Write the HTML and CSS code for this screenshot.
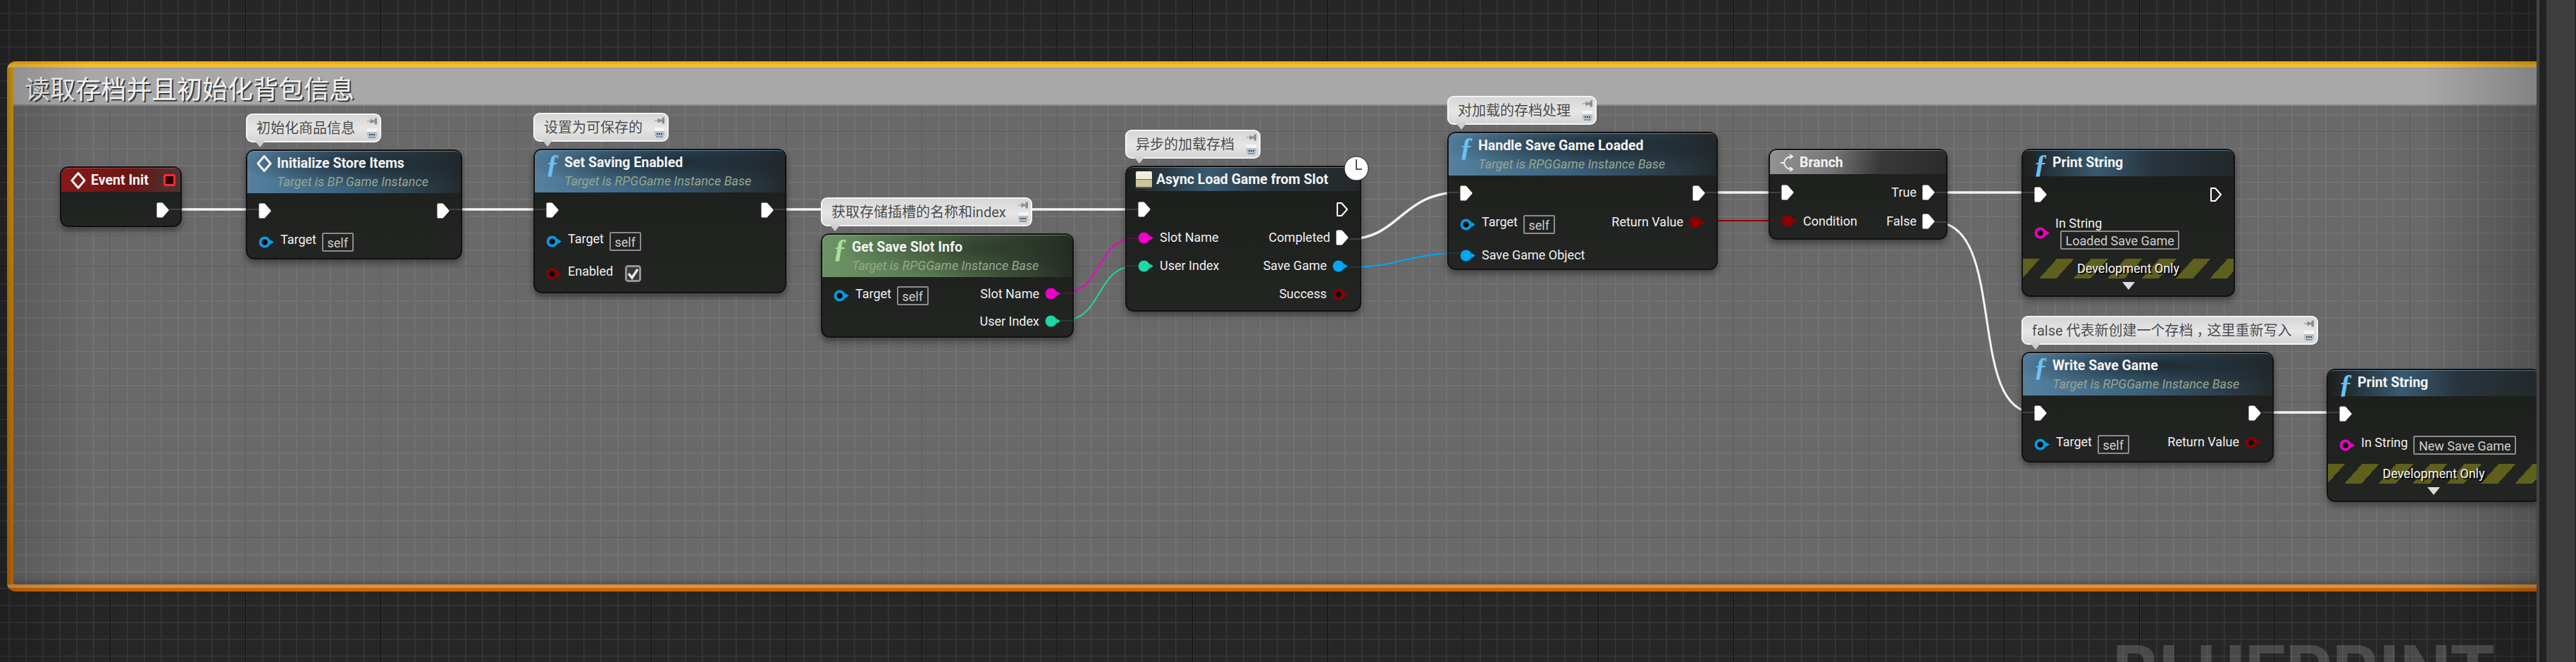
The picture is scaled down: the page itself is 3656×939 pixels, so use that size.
FILE: index.html
```html
<!DOCTYPE html>
<html lang="zh">
<head>
    <meta charset="UTF-8">
    <title>Blueprint</title>
    <link rel="stylesheet" href="styles.css">
</head>
<body>
    <svg class="defs" width="0" height="0">
        <symbol id="exec" viewBox="0 0 18 22"><path d="M2 2H8L16 11L8 20H2Z" fill="currentColor" stroke="currentColor" stroke-width="3" stroke-linejoin="round"/></symbol>
        <symbol id="exec-open" viewBox="0 0 18 22"><path d="M2 2H8L16 11L8 20H2Z" fill="none" stroke="currentColor" stroke-width="2" stroke-linejoin="round"/></symbol>
        <symbol id="data" viewBox="0 0 24 18"><circle cx="9" cy="9" r="8.5" fill="currentColor"/><path d="M17 5L23 9L17 13Z" fill="currentColor"/></symbol>
        <symbol id="data-open" viewBox="0 0 24 18"><circle cx="9" cy="9" r="6.5" fill="#0c0c0c" stroke="currentColor" stroke-width="4"/><path d="M17 5L23 9L17 13Z" fill="currentColor"/></symbol>
        <symbol id="diamond" viewBox="0 0 24 24"><path d="M12 1.5L21 12L12 22.5L3 12Z" fill="none" stroke="#f2f2f2" stroke-width="3" stroke-linejoin="round"/></symbol>
        <symbol id="pushpin" viewBox="0 0 14 10"><path d="M0 5H5M5 2L8 4H11V1H14V9H11V6H8L5 8Z" fill="#8d8d8d" stroke="#8d8d8d"/></symbol>
        <symbol id="chat" viewBox="0 0 14 14"><rect width="14" height="5" fill="#f4f4f4"/><rect y="5" width="14" height="7" fill="#b5c0cc"/><rect y="12" x="2" width="10" height="2" fill="#8a98a8"/><path d="M3 8h2v2H3zM6 8h2v2H6zM9 8h2v2H9z" fill="#3d4650"/></symbol>
    </svg>

    <div class="graph">
        <!-- comment box -->
        <div class="comment">
            <div class="comment-title">读取存档并且初始化背包信息</div>
            <div class="comment-body"></div>
        </div>
        <div class="edge-shade"></div>
        <div class="watermark">BLUEPRINT</div>

        <!-- wires -->
        <svg class="wires" width="3600" height="939">
            <path class="w-exec" d="M240 297H367M638 297H775M1098 297H1615M2419 273H2527M2746 273H2888M3210 585H3320"/>
            <path class="w-exec" d="M1915 339C1985 339 1990 273 2071 273"/>
            <path class="w-exec w-thin" d="M2746 315C2850 315 2790 585 2887 585"/>
            <path class="w-data w-pink" d="M1505 416C1570 416 1550 338 1615 338"/>
            <path class="w-data w-teal" d="M1505 455C1570 455 1550 377 1615 377"/>
            <path class="w-data w-blue" d="M1915 379C1985 379 2000 359 2071 359"/>
            <path class="w-data w-red" d="M2419 313H2527"/>
        </svg>

        <!-- Event Init -->
        <div class="node n-event">
            <div class="node-head head-red">
                <svg class="head-icon"><use href="#diamond"/></svg>
                <div class="head-title">Event Init</div>
                <span class="delegate"></span>
            </div>
            <div class="node-body">
                <div class="pin-row"><span></span><svg class="pin-exec c-white"><use href="#exec"/></svg></div>
            </div>
        </div>

        <!-- Initialize Store Items -->
        <div class="node n-init">
            <div class="bubble"><span class="bubble-text">初始化商品信息</span><span class="bubble-icons"><svg class="i-pin"><use href="#pushpin"/></svg><svg class="i-chat"><use href="#chat"/></svg></span></div>
            <div class="node-head head-blue">
                <svg class="head-icon"><use href="#diamond"/></svg>
                <div class="head-title">Initialize Store Items</div>
                <div class="head-sub">Target is BP Game Instance</div>
            </div>
            <div class="node-body">
                <div class="pin-row"><svg class="pin-exec c-white"><use href="#exec"/></svg><svg class="pin-exec c-white"><use href="#exec"/></svg></div>
                <div class="pin-row"><div class="pin-side"><svg class="pin-data c-blue"><use href="#data-open"/></svg><span class="label">Target</span><span class="value">self</span></div></div>
            </div>
        </div>

        <!-- Set Saving Enabled -->
        <div class="node n-saving">
            <div class="bubble"><span class="bubble-text">设置为可保存的</span><span class="bubble-icons"><svg class="i-pin"><use href="#pushpin"/></svg><svg class="i-chat"><use href="#chat"/></svg></span></div>
            <div class="node-head head-blue">
                <span class="func-icon">ƒ</span>
                <div class="head-title">Set Saving Enabled</div>
                <div class="head-sub">Target is RPGGame Instance Base</div>
            </div>
            <div class="node-body">
                <div class="pin-row"><svg class="pin-exec c-white"><use href="#exec"/></svg><svg class="pin-exec c-white"><use href="#exec"/></svg></div>
                <div class="pin-row"><div class="pin-side"><svg class="pin-data c-blue"><use href="#data-open"/></svg><span class="label">Target</span><span class="value">self</span></div></div>
                <div class="pin-row row-check"><div class="pin-side"><svg class="pin-data c-red"><use href="#data-open"/></svg><span class="label">Enabled</span>
                    <svg class="check" viewBox="0 0 23 24"><rect x="1.5" y="1.5" width="20" height="21" rx="3" fill="#3a3a3a" stroke="#949494" stroke-width="3"/><path d="M5 12L10 18L18 6" fill="none" stroke="#ececec" stroke-width="3.5"/></svg></div></div>
            </div>
        </div>

        <!-- Get Save Slot Info -->
        <div class="node n-slot">
            <div class="bubble"><span class="bubble-text">获取存储插槽的名称和index</span><span class="bubble-icons"><svg class="i-pin"><use href="#pushpin"/></svg><svg class="i-chat"><use href="#chat"/></svg></span></div>
            <div class="node-head head-green">
                <span class="func-icon func-green">ƒ</span>
                <div class="head-title">Get Save Slot Info</div>
                <div class="head-sub">Target is RPGGame Instance Base</div>
            </div>
            <div class="node-body">
                <div class="pin-row">
                    <div class="pin-side"><svg class="pin-data c-blue"><use href="#data-open"/></svg><span class="label">Target</span><span class="value">self</span></div>
                    <div class="pin-side pin-up"><span class="label">Slot Name</span><svg class="pin-data c-pink"><use href="#data"/></svg></div>
                </div>
                <div class="pin-row"><span></span><div class="pin-side pin-up"><span class="label">User Index</span><svg class="pin-data c-teal"><use href="#data"/></svg></div></div>
            </div>
        </div>

        <!-- Async Load Game from Slot -->
        <div class="node n-async">
            <div class="bubble"><span class="bubble-text">异步的加载存档</span><span class="bubble-icons"><svg class="i-pin"><use href="#pushpin"/></svg><svg class="i-chat"><use href="#chat"/></svg></span></div>
            <svg class="clock" viewBox="0 0 36 36"><circle cx="18" cy="18" r="17" fill="#fff" stroke="#1a1a1a" stroke-width="1"/><path d="M18 5V19H26" fill="none" stroke="#555" stroke-width="2"/></svg>
            <div class="node-head head-blue head-short">
                <span class="latent-icon"></span>
                <div class="head-title">Async Load Game from Slot</div>
            </div>
            <div class="node-body">
                <div class="pin-row"><svg class="pin-exec c-white"><use href="#exec"/></svg><svg class="pin-exec c-white"><use href="#exec-open"/></svg></div>
                <div class="pin-row">
                    <div class="pin-side"><svg class="pin-data c-pink"><use href="#data"/></svg><span class="label">Slot Name</span></div>
                    <div class="pin-side"><span class="label">Completed</span><svg class="pin-exec c-white"><use href="#exec"/></svg></div>
                </div>
                <div class="pin-row">
                    <div class="pin-side"><svg class="pin-data c-teal"><use href="#data"/></svg><span class="label">User Index</span></div>
                    <div class="pin-side"><span class="label">Save Game</span><svg class="pin-data c-sky"><use href="#data"/></svg></div>
                </div>
                <div class="pin-row"><span></span><div class="pin-side"><span class="label">Success</span><svg class="pin-data c-red"><use href="#data-open"/></svg></div></div>
            </div>
        </div>

        <!-- Handle Save Game Loaded -->
        <div class="node n-handle">
            <div class="bubble"><span class="bubble-text">对加载的存档处理</span><span class="bubble-icons"><svg class="i-pin"><use href="#pushpin"/></svg><svg class="i-chat"><use href="#chat"/></svg></span></div>
            <div class="node-head head-blue">
                <span class="func-icon">ƒ</span>
                <div class="head-title">Handle Save Game Loaded</div>
                <div class="head-sub">Target is RPGGame Instance Base</div>
            </div>
            <div class="node-body">
                <div class="pin-row"><svg class="pin-exec c-white"><use href="#exec"/></svg><svg class="pin-exec c-white"><use href="#exec"/></svg></div>
                <div class="pin-row">
                    <div class="pin-side"><svg class="pin-data c-blue"><use href="#data-open"/></svg><span class="label">Target</span><span class="value">self</span></div>
                    <div class="pin-side pin-up"><span class="label">Return Value</span><svg class="pin-data c-red"><use href="#data"/></svg></div>
                </div>
                <div class="pin-row"><div class="pin-side"><svg class="pin-data c-sky"><use href="#data"/></svg><span class="label">Save Game Object</span></div></div>
            </div>
        </div>

        <!-- Branch -->
        <div class="node n-branch">
            <div class="node-head head-grey">
                <svg class="head-icon" viewBox="0 0 22 24"><path d="M18 3C11 3 8 7 7 12C8 17 11 21 18 21M2 12H7M15 0L19 3L15 6M15 18L19 21L15 24" fill="none" stroke="#eee" stroke-width="2"/></svg>
                <div class="head-title">Branch</div>
            </div>
            <div class="node-body">
                <div class="pin-row">
                    <svg class="pin-exec c-white"><use href="#exec"/></svg>
                    <div class="pin-side"><span class="label">True</span><svg class="pin-exec c-white"><use href="#exec"/></svg></div>
                </div>
                <div class="pin-row">
                    <div class="pin-side"><svg class="pin-data c-red"><use href="#data"/></svg><span class="label">Condition</span></div>
                    <div class="pin-side"><span class="label">False</span><svg class="pin-exec c-white"><use href="#exec"/></svg></div>
                </div>
            </div>
        </div>

        <!-- Print String -->
        <div class="node n-print">
            <div class="node-head head-blue head-short">
                <span class="func-icon">ƒ</span>
                <div class="head-title">Print String</div>
            </div>
            <div class="node-body">
                <div class="pin-row"><svg class="pin-exec c-white"><use href="#exec"/></svg><svg class="pin-exec c-white"><use href="#exec-open"/></svg></div>
                <div class="string-row">
                    <svg class="pin-data c-pink"><use href="#data-open"/></svg>
                    <div class="string-stack"><span class="label">In String</span><span class="value string-box">Loaded Save Game</span></div>
                </div>
            </div>
            <div class="dev-only">Development Only</div>
            <div class="dev-arrow"></div>
        </div>

        <!-- Write Save Game -->
        <div class="node n-write">
            <div class="bubble"><span class="bubble-text">false 代表新创建一个存档<span class="comma">，</span>这里重新写入</span><span class="bubble-icons"><svg class="i-pin"><use href="#pushpin"/></svg><svg class="i-chat"><use href="#chat"/></svg></span></div>
            <div class="node-head head-blue">
                <span class="func-icon">ƒ</span>
                <div class="head-title">Write Save Game</div>
                <div class="head-sub">Target is RPGGame Instance Base</div>
            </div>
            <div class="node-body">
                <div class="pin-row"><svg class="pin-exec c-white"><use href="#exec"/></svg><svg class="pin-exec c-white"><use href="#exec"/></svg></div>
                <div class="pin-row">
                    <div class="pin-side"><svg class="pin-data c-blue"><use href="#data-open"/></svg><span class="label">Target</span><span class="value">self</span></div>
                    <div class="pin-side pin-up"><span class="label">Return Value</span><svg class="pin-data c-red"><use href="#data-open"/></svg></div>
                </div>
            </div>
        </div>

        <!-- Print String, second one runs past the panel edge -->
        <div class="node n-print2">
            <div class="node-head head-blue head-short">
                <span class="func-icon">ƒ</span>
                <div class="head-title">Print String</div>
            </div>
            <div class="node-body">
                <div class="pin-row"><svg class="pin-exec c-white"><use href="#exec"/></svg></div>
                <div class="pin-row"><div class="pin-side"><svg class="pin-data c-pink"><use href="#data-open"/></svg><span class="label">In String</span><span class="value">New Save Game</span></div></div>
            </div>
            <div class="dev-only">Development Only</div>
            <div class="dev-arrow"></div>
        </div>

        <!-- faint wire ends that show through the node edge -->
        <svg class="stubs" width="3600" height="939">
            <path stroke="#fff" d="M240 297H258M349 297H367M638 297H656M757 297H775M1098 297H1115M1598 297H1615M1915 339H1932M2055 273H2071M2419 273H2437M2510 273H2527M2746 273H2764M2746 315H2764M2869 273H2888M2869 585H2887M3210 585H3227M3302 585H3320"/>
            <path stroke="#00a8f4" d="M1915 379H1932M2055 359H2071"/>
            <path stroke="#ff00d4" d="M1505 416H1524M1598 338H1615"/>
            <path stroke="#1fe0a8" d="M1505 455H1524M1598 377H1615"/>
            <path stroke="#a00000" d="M2419 313H2437M2510 313H2527"/>
        </svg>
    </div>
    <div class="side"></div>
</body>
</html>
```

FILE: styles.css
```css
/* General Styling */
* {
    margin: 0;
    padding: 0;
    box-sizing: border-box;
}

body {
    display: flex;
    height: 100vh;
    overflow: hidden;
    background: #262626;
    font-family: Roboto, "Noto Sans CJK SC", sans-serif;
    color: #eee;
}

.defs {
    position: absolute;
}

/* Graph canvas */
.graph {
    position: relative;
    flex: none;
    width: 3600px;
    height: 939px;
    overflow: hidden;
    background-color: #262626;
    background-image:
        linear-gradient(90deg, #111 1px, transparent 1px),
        linear-gradient(#111 1px, transparent 1px),
        linear-gradient(90deg, #363636 1px, #303030 1px 2px, transparent 2px),
        linear-gradient(#363636 1px, #303030 1px 2px, transparent 2px);
    background-size: 192px 192px, 192px 192px, 24px 24px, 24px 24px;
    background-position: 156px 0, 0 186px, 12px 0, 0 18px;
}

.side {
    flex: 1;
    background: linear-gradient(90deg, #444 0 4px, #222 4px 14px, #3e3e3e 14px calc(100% - 2px), #2a2a2a calc(100% - 2px));
}

.watermark {
    position: absolute;
    left: 2998px;
    top: 894px;
    font-size: 103px;
    line-height: 120px;
    font-weight: 700;
    color: rgba(255, 255, 255, 0.17);
    white-space: nowrap;
}

/* Comment box */
.comment {
    position: absolute;
    left: 10px;
    top: 87px;
    width: 3700px;
    height: 752px;
    padding: 9px 0 10px 9px;
    display: flex;
    flex-direction: column;
    border-radius: 12px;
    background:
        linear-gradient(#f4ae0a 0 4px, #f3bd42 4px 9px, transparent 9px),
        linear-gradient(transparent calc(100% - 10px), #dc9240 calc(100% - 10px) calc(100% - 5px), #cc6600 calc(100% - 5px)),
        linear-gradient(90deg, rgba(0, 0, 0, 0.12), transparent 9px),
        linear-gradient(#e0a010, #c87008);
}

.comment-title {
    flex: none;
    height: 54px;
    padding: 6px 0 0 16px;
    font-size: 36px;
    line-height: 50px;
    color: #f2f2f2;
    text-shadow: 2px 2px 0 #3c3c3c;
    background: #a8a8a8;
    border-top: 1px solid #999;
    border-bottom: 2px solid #8c8c8c;
    border-top-left-radius: 4px;
}

.comment-body {
    flex: 1;
    background-color: #696969;
    background-image:
        linear-gradient(90deg, #5b5b5b 1px, transparent 1px),
        linear-gradient(#5b5b5b 1px, transparent 1px),
        linear-gradient(90deg, #757575 1px, #6f6f6f 1px 2px, transparent 2px),
        linear-gradient(#757575 1px, #6f6f6f 1px 2px, transparent 2px);
    background-size: 192px 192px, 192px 192px, 24px 24px, 24px 24px;
    background-position: 156px 0, 0 186px, 12px 0, 0 18px;
    background-attachment: fixed;
    box-shadow: inset 0 -14px 14px -12px rgba(0, 0, 0, 0.3);
    border-bottom-left-radius: 4px;
}

.edge-shade {
    position: absolute;
    inset: 0;
    background:
        linear-gradient(90deg, rgba(0, 0, 0, 0.16), transparent 130px),
        linear-gradient(270deg, rgba(0, 0, 0, 0.22), transparent 160px);
}

/* Wires */
.wires, .stubs {
    position: absolute;
    left: 0;
    top: 0;
    fill: none;
}

.stubs {
    z-index: 5;
    stroke-width: 2;
    opacity: 0.14;
}

.w-exec { stroke: #f4f4f4; stroke-width: 3.5; fill: none; }
.w-thin { stroke-width: 3; }
.w-data { stroke-width: 2; fill: none; }
.w-pink { stroke: #f000c8; }
.w-teal { stroke: #1cd8a4; }
.w-blue { stroke: #00a8f4; }
.w-red { stroke: #9a0000; }

/* Nodes */
.node {
    position: absolute;
    z-index: 3;
    display: flex;
    flex-direction: column;
    background: linear-gradient(#1c1e1c, #232523);
    border: 2px solid #111;
    border-radius: 12px;
    box-shadow: 0 5px 10px rgba(0, 0, 0, 0.4);
    --row: 44px;
    --pad: 3px;
}

.n-event { left: 85px; top: 236px; width: 173px; height: 86px; --row: 44px; --pad: 4px; }
.n-init { left: 349px; top: 212px; width: 307px; height: 156px; }
.n-saving { left: 757px; top: 211px; width: 359px; height: 205px; }
.n-slot { left: 1165px; top: 331px; width: 359px; height: 148px; --row: 39px; --pad: 7px; }
.n-async { left: 1597px; top: 235px; width: 335px; height: 207px; --row: 40px; --pad: 6px; }
.n-handle { left: 2054px; top: 187px; width: 384px; height: 196px; }
.n-branch { left: 2510px; top: 211px; width: 254px; height: 129px; --row: 41px; --pad: 5px; }
.n-print { left: 2869px; top: 211px; width: 303px; height: 210px; --row: 40px; --pad: 6px; }
.n-write { left: 2869px; top: 499px; width: 358px; height: 157px; }
.n-print2 { left: 3302px; top: 523px; width: 304px; height: 189px; }

.node-head {
    flex: none;
    display: grid;
    grid-template-columns: 42px 1fr;
    align-items: center;
    padding: 3px 0;
    border-radius: 9px 9px 0 0;
    border-top: 1px solid rgba(130, 180, 215, 0.5);
}

.head-title {
    grid-column: 2;
    grid-row: 1;
    font-size: 19.5px;
    line-height: 27px;
    font-weight: 700;
    color: #f4f4f4;
    white-space: nowrap;
}

.head-sub {
    grid-column: 2;
    font-size: 18px;
    line-height: 26px;
    font-style: italic;
    color: #98a58c;
    white-space: nowrap;
}

.head-blue {
    background:
        radial-gradient(ellipse 60% 60% at 55% 28%, rgba(20, 26, 30, 0.7), transparent 100%),
        linear-gradient(90deg, #55819f 0%, #3b637e 45%, #23292c 100%);
}

.head-short {
    background: linear-gradient(90deg, #4f7c9c 0%, #39597000 0%, #385a72 35%, #28343c 62%, #23282a 100%);
}

.head-green {
    border-top-color: rgba(160, 200, 150, 0.5);
    background:
        radial-gradient(ellipse 55% 70% at 62% 30%, rgba(22, 28, 22, 0.45), transparent 100%),
        linear-gradient(90deg, #6c9365 0%, #56784f 45%, #262c25 100%);
}

.head-red {
    position: relative;
    border-top-color: rgba(220, 120, 120, 0.4);
    background: linear-gradient(90deg, #861a1a 0%, #6e1313 55%, #4a3434 100%);
}

.head-grey {
    border-top-color: rgba(255, 255, 255, 0.3);
    background: linear-gradient(100deg, #949494 0%, #767676 35%, #393939 62%, #2a2a2a 100%);
}

.head-icon {
    grid-column: 1;
    grid-row: 1;
    justify-self: center;
    width: 24px;
    height: 24px;
    margin-left: 6px;
}

.func-icon {
    grid-column: 1;
    grid-row: 1 / span 2;
    align-self: start;
    justify-self: center;
    margin-left: 8px;
    font-family: "Liberation Serif", serif;
    font-style: italic;
    font-weight: 700;
    font-size: 38px;
    line-height: 30px;
    color: #6cc0f5;
}

.func-green {
    color: #a8e298;
}

.latent-icon {
    grid-column: 1;
    justify-self: center;
    width: 23px;
    height: 24px;
    margin-left: 6px;
    border-radius: 2px;
    background: linear-gradient(#f2eedc 0 11px, #6d6a58 11px 12px, #cdc39d 12px 22px, #5f5a48 22px);
}

.delegate {
    position: absolute;
    right: 7px;
    top: 8px;
    width: 17px;
    height: 17px;
    background: #2a0000;
    border: 3px solid #ff2a2a;
    border-radius: 3px;
}

.clock {
    position: absolute;
    right: -13px;
    top: -16px;
    z-index: 2;
    width: 36px;
    height: 36px;
}

.node-body {
    padding: var(--pad) 16px 0;
}

.pin-row {
    display: flex;
    justify-content: space-between;
    align-items: center;
    height: var(--row);
}

.row-check {
    margin-top: 2px;
}

.pin-side {
    display: flex;
    align-items: center;
    gap: 8px;
}

.pin-up {
    transform: translateY(-3px);
}

.pin-exec {
    flex: none;
    width: 18px;
    height: 22px;
}

.pin-data {
    flex: none;
    width: 23px;
    height: 17px;
}

.c-white { color: #fff; }
.c-blue { color: #0a9ae6; }
.c-sky { color: #00a8f4; }
.c-red { color: #8c0000; }
.c-pink { color: #f000c8; }
.c-teal { color: #1cd8a4; }

.label {
    font-size: 18px;
    line-height: 22px;
    white-space: nowrap;
    color: #f0f0f0;
}

/* label sits a bit higher than the pin when a value box follows it */
.label:has(+ .value), .label:has(+ .check) {
    transform: translateY(-3px);
}

.value {
    padding: 0 5.5px;
    height: 27px;
    font-size: 18px;
    line-height: 25px;
    color: #cfcfcf;
    border: 2px solid #8c8c8c;
    border-radius: 2px;
    white-space: nowrap;
}

.check {
    width: 23px;
    height: 24px;
    margin-left: 9px;
}

/* In String pin with the box below its label */
.string-row {
    display: flex;
    align-items: center;
    gap: 7px;
    margin-top: 11px;
}

.string-stack {
    display: flex;
    flex-direction: column;
    align-items: flex-start;
}

.string-stack .label {
    height: 20px;
    line-height: 20px;
    transform: none;
}

.string-box {
    margin-left: 7px;
}

.dev-only {
    flex: none;
    height: 28px;
    margin-top: 13px;
    font-size: 18px;
    line-height: 28px;
    text-align: center;
    color: #f4f4f4;
    text-shadow: 2px 2px 1px #000;
    background: repeating-linear-gradient(132deg, #5f5f1e 0 18px, transparent 18px 36px);
}

.n-print2 .dev-only {
    margin-top: 5px;
}

.dev-arrow {
    flex: none;
    width: 0;
    height: 0;
    margin: 5px auto 0;
    border-left: 9px solid transparent;
    border-right: 9px solid transparent;
    border-top: 11px solid #dcdcdc;
}

/* Comment bubbles above nodes */
.bubble {
    position: absolute;
    left: -2px;
    bottom: calc(100% + 12px);
    display: flex;
    align-items: center;
    height: 41px;
    padding: 0 4px 0 13px;
    gap: 17px;
    white-space: nowrap;
    background: linear-gradient(#d6d6d6, #e6e6e6 55%, #d4d4d4);
    border: 2px solid #f4f4f4;
    border-radius: 9px;
}

.bubble::after {
    content: "";
    position: absolute;
    left: 11px;
    top: 100%;
    border-left: 7px solid transparent;
    border-right: 7px solid transparent;
    border-top: 9px solid #cfcfcf;
}

.bubble-text {
    font-size: 20px;
    line-height: 28px;
    color: #4c4c4c;
}

/* comma glyph sits in the middle of its cell in the original */
.comma {
    display: inline-block;
    width: 1em;
    padding-left: 5px;
}

.bubble-icons {
    display: flex;
    flex-direction: column;
    gap: 5px;
}

.i-pin {
    width: 14px;
    height: 10px;
}

.i-chat {
    width: 14px;
    height: 14px;
}
```
